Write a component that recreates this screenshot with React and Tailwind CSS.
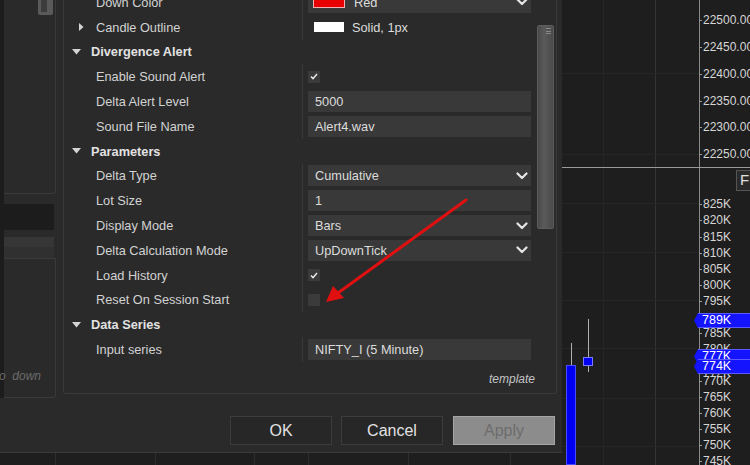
import React from "react";

const Chevron = () => (
  <svg width="12" height="8" viewBox="0 0 12 8">
    <path d="M1.5 1.5 L6 6 L10.5 1.5" fill="none" stroke="#e6e6e6" strokeWidth="2.2" strokeLinecap="round" strokeLinejoin="round" />
  </svg>
);

const Check = () => (
  <svg width="8" height="7" viewBox="0 0 8 7">
    <path d="M1 3.6 L3 5.6 L7 1" stroke="#f0f0f0" strokeWidth="1.4" fill="none" />
  </svg>
);

const rows = [
  { t: "p", label: "Down Color", v: { k: "color", text: "Red" } },
  { t: "p", label: "Candle Outline", expand: true, v: { k: "swatch", text: "Solid, 1px" } },
  { t: "c", label: "Divergence Alert" },
  { t: "p", label: "Enable Sound Alert", v: { k: "check", on: true } },
  { t: "p", label: "Delta Alert Level", v: { k: "input", text: "5000" } },
  { t: "p", label: "Sound File Name", v: { k: "input", text: "Alert4.wav" } },
  { t: "c", label: "Parameters" },
  { t: "p", label: "Delta Type", v: { k: "select", text: "Cumulative" } },
  { t: "p", label: "Lot Size", v: { k: "input", text: "1" } },
  { t: "p", label: "Display Mode", v: { k: "select", text: "Bars" } },
  { t: "p", label: "Delta Calculation Mode", v: { k: "select", text: "UpDownTick" } },
  { t: "p", label: "Load History", v: { k: "check", on: true } },
  { t: "p", label: "Reset On Session Start", v: { k: "check", on: false } },
  { t: "c", label: "Data Series" },
  { t: "p", label: "Input series", v: { k: "input", text: "NIFTY_I (5 Minute)" } },
];

function Value({ v }) {
  if (v.k === "check") {
    return (
      <div className="ml-[5px] w-[12px] h-[12px] bg-[#3b3b3b] flex items-center justify-center">
        {v.on && <Check />}
      </div>
    );
  }
  if (v.k === "swatch") {
    return (
      <div className="flex items-center ml-[11px]">
        <div className="w-[30px] h-[10px] bg-white" />
        <span className="ml-[8px] text-[#dcdcdc]">{v.text}</span>
      </div>
    );
  }
  return (
    <div className="ml-[5px] w-[223px] h-[21px] bg-[#393939] flex items-center pl-[7px] pr-[3px]">
      {v.k === "color" && <div className="w-[32px] h-[12px] bg-[#e80000] border border-[#f4b0b0] mr-[9px] -ml-[2px]" />}
      <span className="text-[#dcdcdc] flex-1 whitespace-nowrap">{v.text}</span>
      {(v.k === "select" || v.k === "color") && <Chevron />}
    </div>
  );
}

function Row({ r }) {
  if (r.t === "c") {
    return (
      <div className="h-[24.8px] flex items-center pl-[8px]">
        <svg width="9" height="6" viewBox="0 0 9 6" className="mr-[10px]">
          <path d="M0 0 L9 0 L4.5 5.5 Z" fill="#d4d4d4" />
        </svg>
        <span className="font-bold text-[#e2e2e2]">{r.label}</span>
      </div>
    );
  }
  return (
    <div className="h-[24.8px] flex items-center">
      <div className="w-[239px] h-full border-r border-[#3a3a3a] flex items-center">
        <div className="w-[32px] flex justify-end pr-[12px]">
          {r.expand && (
            <svg width="5" height="8" viewBox="0 0 5 8">
              <path d="M0 0 L4.5 4 L0 8 Z" fill="#d4d4d4" />
            </svg>
          )}
        </div>
        <span className="text-[#d2d2d2] whitespace-nowrap">{r.label}</span>
      </div>
      <div className="flex-1 flex items-center">
        <Value v={r.v} />
      </div>
    </div>
  );
}

const upper = [
  ["22500.00", 20],
  ["22450.00", 47],
  ["22400.00", 74],
  ["22350.00", 101],
  ["22300.00", 127],
  ["22250.00", 154],
];
const lower = [
  ["825K", 204], ["820K", 220], ["815K", 237], ["810K", 253], ["805K", 269], ["800K", 285],
  ["795K", 301], ["785K", 333], ["780K", 349], ["772K", 373], ["770K", 381], ["765K", 397],
  ["760K", 413], ["755K", 429], ["750K", 445], ["745K", 461],
];
const tags = [
  ["789K", 320],
  ["777K", 356],
  ["774K", 366],
];

export default function App() {
  return (
    <div className="relative w-[750px] h-[465px] overflow-hidden bg-[#1e1e1e] font-['Liberation_Sans',Arial,sans-serif] text-[12.75px]">
      {/* chart grid */}
      <div className="absolute left-[603px] top-0 w-px h-[465px] bg-[#262626]" />
      <div className="absolute left-[655px] top-0 w-px h-[465px] bg-[#333333]" />
      {[55, 155, 254, 308, 408, 510].map((x) => (
        <div key={x} className="absolute top-[453px] w-px h-[12px] bg-[#2e2e2e]" style={{ left: x }} />
      ))}
      {[73, 154, 203, 252, 300, 348, 398, 446].map((y) => (
        <div key={y} className="absolute left-[562px] w-[138px] h-px bg-[#262626]" style={{ top: y }} />
      ))}
      {/* axis */}
      <div className="absolute left-[699px] top-0 w-px h-[465px] bg-[#8a8a8a]" />
      <div className="absolute left-[562px] top-[167px] w-[188px] h-px bg-[#9a9a9a]" />
      {upper.map(([t, y]) => (
        <div key={t} className="absolute left-[699px] flex items-center h-[14px]" style={{ top: y - 7 }}>
          <div className="w-[3px] h-px bg-[#9a9a9a]" />
          <span className="ml-[1px] text-[12px] text-[#d6d6d6] whitespace-nowrap">{t}</span>
        </div>
      ))}
      {lower.map(([t, y]) => (
        <div key={t} className="absolute left-[699px] flex items-center h-[14px]" style={{ top: y - 7 }}>
          <div className="w-[3px] h-px bg-[#9a9a9a]" />
          <span className="ml-[1px] text-[12px] text-[#d6d6d6] whitespace-nowrap">{t}</span>
        </div>
      ))}
      {tags.map(([t, y]) => (
        <div key={t} className="absolute left-[694px] flex items-center h-[15px]" style={{ top: y - 7.5 }}>
          <svg width="4" height="15" viewBox="0 0 4 15">
            <path d="M4 0 L0 7.5 L4 15 Z" fill="#1414ff" />
          </svg>
          <div className="w-[56px] h-[15px] bg-[#1414ff] border-t border-b border-[#5a5aff] pl-[4px] flex items-center text-[12.5px] text-white">
            {t}
          </div>
        </div>
      ))}
      {/* F button */}
      <div className="absolute left-[736px] top-[170px] w-[20px] h-[21px] bg-[#2a2a2a] border border-[#555] flex items-center pl-[3px] text-[15px] text-[#e0e0e0]">
        F
      </div>
      {/* candles */}
      <div className="absolute left-[571px] top-[343px] w-px h-[22px] bg-[#b0b0b0]" />
      <div className="absolute left-[566px] top-[365px] w-[10px] h-[100px] bg-[#0000f0] border border-[#4a4aff]" />
      <div className="absolute left-[588px] top-[319px] w-px h-[53px] bg-[#b0b0b0]" />
      <div className="absolute left-[583px] top-[357px] w-[10px] h-[9px] bg-[#0000f0] border border-[#7a7aff]" />

      {/* dialog window */}
      <div className="absolute left-0 top-0 w-[562px] h-[453px] bg-[#2a2a2a] border-b border-[#3a3a3a] flex flex-col">
        <div className="flex h-[398px]">
          {/* left panel */}
          <div className="w-[56px] h-full flex flex-col border-l-[4px] border-[#1c1c1c]">
            <div className="h-[194px] border-r border-b border-[#3a3a3a] rounded-br-[3px] relative">
              <div className="absolute left-[34px] top-0 w-[15px] h-[15px] bg-[#5a5a5a] rounded-b-[2px] flex items-start pl-[3px]">
                <div className="w-[6px] h-[12px] bg-[#3c3c3c]" />
              </div>
            </div>
            <div className="h-[10px]" />
            <div className="h-[26px] bg-[#1c1c1c] w-[50px]" />
            <div className="h-[7px]" />
            <div className="h-[10px] bg-[#363636] w-[50px]" />
            <div className="h-[11px] bg-[#303030] w-[50px]" />
            <div className="flex-1 border-r border-b border-t border-[#3a3a3a] rounded-br-[3px] flex flex-col justify-end pb-[12px]">
              <span className="italic text-[#6c6c6c] text-[12px] -ml-[5px] whitespace-nowrap">o&nbsp;&nbsp;down</span>
            </div>
          </div>
          {/* properties panel */}
          <div className="ml-[7px] w-[494px] h-[394px] border-l border-r border-b border-[#3a3a3a] rounded-b-[3px] flex overflow-hidden">
            <div className="w-[471px] flex flex-col">
              <div className="-mt-[10px]">
                {rows.map((r) => (
                  <Row key={r.label} r={r} />
                ))}
              </div>
              <div className="mt-auto pb-[5px] text-right italic text-[12px] text-[#c4c4c4]">template</div>
            </div>
            <div className="w-[21px] pl-[2px]">
              <div className="mt-[25px] w-[17px] h-[204px] border border-[#5c5c5c] bg-[linear-gradient(90deg,#4a4a4a,#5a5a5a_40%,#4a4a4a)] rounded-[2px] relative">
                <div className="absolute right-[2px] top-[2px] w-[5px] h-[6px] flex flex-col justify-between">
                  <div className="h-px bg-[#888]" />
                  <div className="h-px bg-[#888]" />
                  <div className="h-px bg-[#888]" />
                </div>
              </div>
            </div>
          </div>
        </div>
        {/* buttons */}
        <div className="flex justify-end pr-[7px] pt-[18px] gap-[9px]">
          <button className="w-[102px] h-[29px] bg-[#272727] border border-[#3c3c3c] text-[16px] text-[#e2e2e2]">OK</button>
          <button className="w-[102px] h-[29px] bg-[#272727] border border-[#3c3c3c] text-[16px] text-[#e2e2e2] mr-[1px]">Cancel</button>
          <button className="w-[102px] h-[29px] bg-[#8c8c8c] border border-[#a6a6a6] text-[16px] text-[#6c6c6c]">Apply</button>
        </div>
      </div>

      {/* red arrow annotation */}
      <svg className="absolute left-0 top-0 pointer-events-none" width="750" height="465" viewBox="0 0 750 465">
        <line x1="466" y1="200" x2="338" y2="293" stroke="#e01010" strokeWidth="3" strokeLinecap="round" />
        <path d="M326 302 L333 286 L344 298 Z" fill="#e01010" />
      </svg>
    </div>
  );
}
